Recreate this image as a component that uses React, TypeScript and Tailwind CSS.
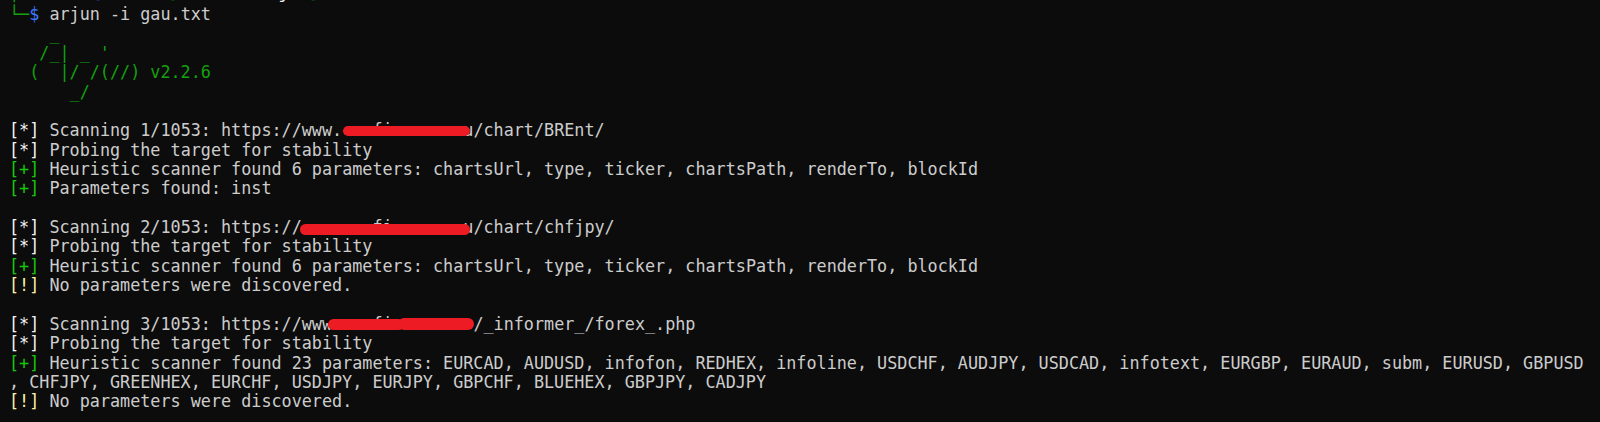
import React from "react";

const W = "text-[#f2f2f2]";
const G = "text-[#16c60c]";
const Y = "text-[#f9f1a5]";

function Tag({ kind }: { kind: "*" | "+" | "!" }) {
  const color = kind === "*" ? W : kind === "+" ? G : Y;
  return <span className={color}>[{kind}]</span>;
}

// hidden host name with a red marker stroke drawn over it
function Redacted({ text, bars }: { text: string; bars: string[] }) {
  return (
    <span className="relative">
      {text}
      {bars.map((b, i) => (
        <span key={i} className={`absolute rounded-full bg-[#ed1c24] ${b}`} />
      ))}
    </span>
  );
}

function Line({ children, className = "" }: { children?: React.ReactNode; className?: string }) {
  return <div className={`h-[19.35px] whitespace-pre ${className}`}>{children ?? " "}</div>;
}

export default function App() {
  return (
    <div className="h-[422px] w-[1600px] overflow-hidden bg-[#0c0c0c] pl-[9px] font-['DejaVu_Sans_Mono',monospace] text-[16.78px] leading-[19.35px] text-[#cccccc]">
      <div className="-mt-[17px]">
        <Line className="mb-[3px]">
          <span className="text-[#13a10e]">┌──(</span>
          <span className="text-[#3b78ff]">kali㉿kali</span>
          <span className="text-[#13a10e]">)-[</span>
          <span className="text-[#f2f2f2]">~/tools/Arjun</span>
          <span className="text-[#13a10e]">]</span>
        </Line>
        <Line>
          <span className="text-[#13a10e]">└─</span>
          <span className="text-[#3b78ff]">$</span> arjun -i gau.txt
        </Line>
        <div className="text-[#13a10e]">
          <Line>{"    _"}</Line>
          <Line>{"   /_| _ '"}</Line>
          <Line>{"  (  |/ /(//) v2.2.6"}</Line>
          <Line>{"      _/"}</Line>
        </div>
        <Line />
        <Line>
          <Tag kind="*" /> Scanning 1/1053: https://www.
          <Redacted text="   fi       u" bars={["left-[1px] top-[6px] h-[10px] w-[127px]"]} />
          /chart/BREnt/
        </Line>
        <Line>
          <Tag kind="*" /> Probing the target for stability
        </Line>
        <Line>
          <Tag kind="+" /> Heuristic scanner found 6 parameters: chartsUrl, type, ticker, chartsPath, renderTo, blockId
        </Line>
        <Line>
          <Tag kind="+" /> Parameters found: inst
        </Line>
        <Line />
        <Line>
          <Tag kind="*" /> Scanning 2/1053: https://
          <Redacted text="       fi       u" bars={["-left-[2px] top-[7px] h-[11px] w-[170px]"]} />
          /chart/chfjpy/
        </Line>
        <Line>
          <Tag kind="*" /> Probing the target for stability
        </Line>
        <Line>
          <Tag kind="+" /> Heuristic scanner found 6 parameters: chartsUrl, type, ticker, chartsPath, renderTo, blockId
        </Line>
        <Line>
          <Tag kind="!" /> No parameters were discovered.
        </Line>
        <Line />
        <Line>
          <Tag kind="*" /> Scanning 3/1053: https://www
          <Redacted
            text="    fi        "
            bars={["-left-[4px] top-[5px] h-[11px] w-[76px]", "left-[66px] top-[4px] h-[12px] w-[76px]"]}
          />
          /_informer_/forex_.php
        </Line>
        <Line>
          <Tag kind="*" /> Probing the target for stability
        </Line>
        <Line>
          <Tag kind="+" /> Heuristic scanner found 23 parameters: EURCAD, AUDUSD, infofon, REDHEX, infoline, USDCHF, AUDJPY, USDCAD, infotext, EURGBP, EURAUD, subm, EURUSD, GBPUSD
        </Line>
        <Line>, CHFJPY, GREENHEX, EURCHF, USDJPY, EURJPY, GBPCHF, BLUEHEX, GBPJPY, CADJPY</Line>
        <Line>
          <Tag kind="!" /> No parameters were discovered.
        </Line>
      </div>
    </div>
  );
}
